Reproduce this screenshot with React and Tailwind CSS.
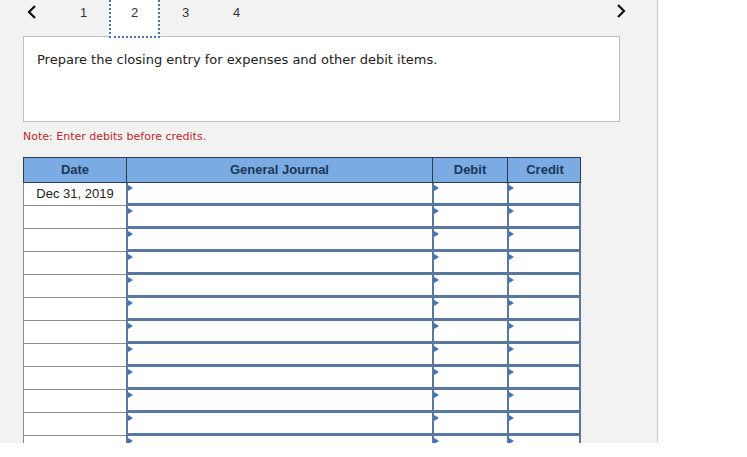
import React from 'react';

const tabs = [1, 2, 3, 4];
const rows = Array.from({ length: 12 }, (_, i) => (i === 0 ? 'Dec 31, 2019' : ''));

function Chevron({ dir = 'left' }) {
  return (
    <svg width="10" height="14" viewBox="0 0 10 14" className="block">
      <polyline
        points={dir === 'left' ? '8,1 2,7 8,13' : '2,1 8,7 2,13'}
        fill="none"
        stroke="#111"
        strokeWidth="2.2"
      />
    </svg>
  );
}

function InputCell({ last }) {
  return (
    <div
      className={`relative bg-white border-l-2 border-b-[3px] border-[#5a789f] ${last ? 'border-r-2' : ''}`}
    >
      {/* dropdown marker */}
      <span className="absolute top-[2px] left-0 w-0 h-0 border-y-[3px] border-y-transparent border-l-[5px] border-l-[#3f73b6]" />
    </div>
  );
}

export default function App() {
  return (
    <div className="w-[747px] h-[457px] bg-white flex items-start" style={{ fontFamily: '"Liberation Sans", Arial, sans-serif' }}>
      <div className="w-[658px] h-[443px] bg-[#f2f2f2] border-r border-[#cccccc] overflow-hidden flex flex-col">
        {/* step nav */}
        <div className="h-[36px] flex items-start shrink-0">
          <div className="w-[58px] h-[36px] flex items-start pl-[27px] pt-[5px]">
            <Chevron dir="left" />
          </div>
          {tabs.map((t) => (
            <div
              key={t}
              className={`w-[51px] flex justify-center pt-[4px] text-[13px] leading-[18px] text-[#333] ${
                t === 2
                  ? 'h-[38px] relative z-10 bg-white border-x-2 border-b-2 border-dotted border-[#4d74a8]'
                  : 'h-[36px]'
              }`}
            >
              {t}
            </div>
          ))}
          <div className="flex-1" />
          <div className="w-[41px] pt-[4px]">
            <Chevron dir="right" />
          </div>
        </div>

        {/* question */}
        <div className="ml-[23px] w-[597px] h-[86px] shrink-0 bg-white border border-[#bdbdbd] pl-[13px] pt-[15px]">
          <p className="text-[13px] leading-[16px] text-[#222]" style={{ fontFamily: '"DejaVu Sans", Verdana, sans-serif' }}>
            Prepare the closing entry for expenses and other debit items.
          </p>
        </div>

        <p
          className="ml-[23px] mt-[8px] text-[11px] leading-[14px] text-[#c0282e] shrink-0"
          style={{ fontFamily: '"DejaVu Sans", Verdana, sans-serif' }}
        >
          Note: Enter debits before credits.
        </p>

        {/* journal table */}
        <div className="ml-[23px] mt-[13px] w-[558px] shrink-0">
          <div className="grid grid-cols-[103px_306px_75px_74px] h-[26px] bg-[#7aace3] border border-[#2e3b4a] text-[13px] font-bold text-[#1d3658]">
            <div className="flex items-center justify-center border-r border-[#2e3b4a]">Date</div>
            <div className="flex items-center justify-center border-r border-[#2e3b4a]">General Journal</div>
            <div className="flex items-center justify-center border-r border-[#2e3b4a]">Debit</div>
            <div className="flex items-center justify-center">Credit</div>
          </div>
          {rows.map((d, i) => (
            <div key={i} className="grid grid-cols-[103px_306px_75px_74px] h-[23px]">
              <div className="bg-white border-l border-b border-[#8c8c8c] flex items-center justify-center text-[13px] text-[#222]">
                {d}
              </div>
              <InputCell />
              <InputCell />
              <InputCell last />
            </div>
          ))}
        </div>
      </div>
    </div>
  );
}
